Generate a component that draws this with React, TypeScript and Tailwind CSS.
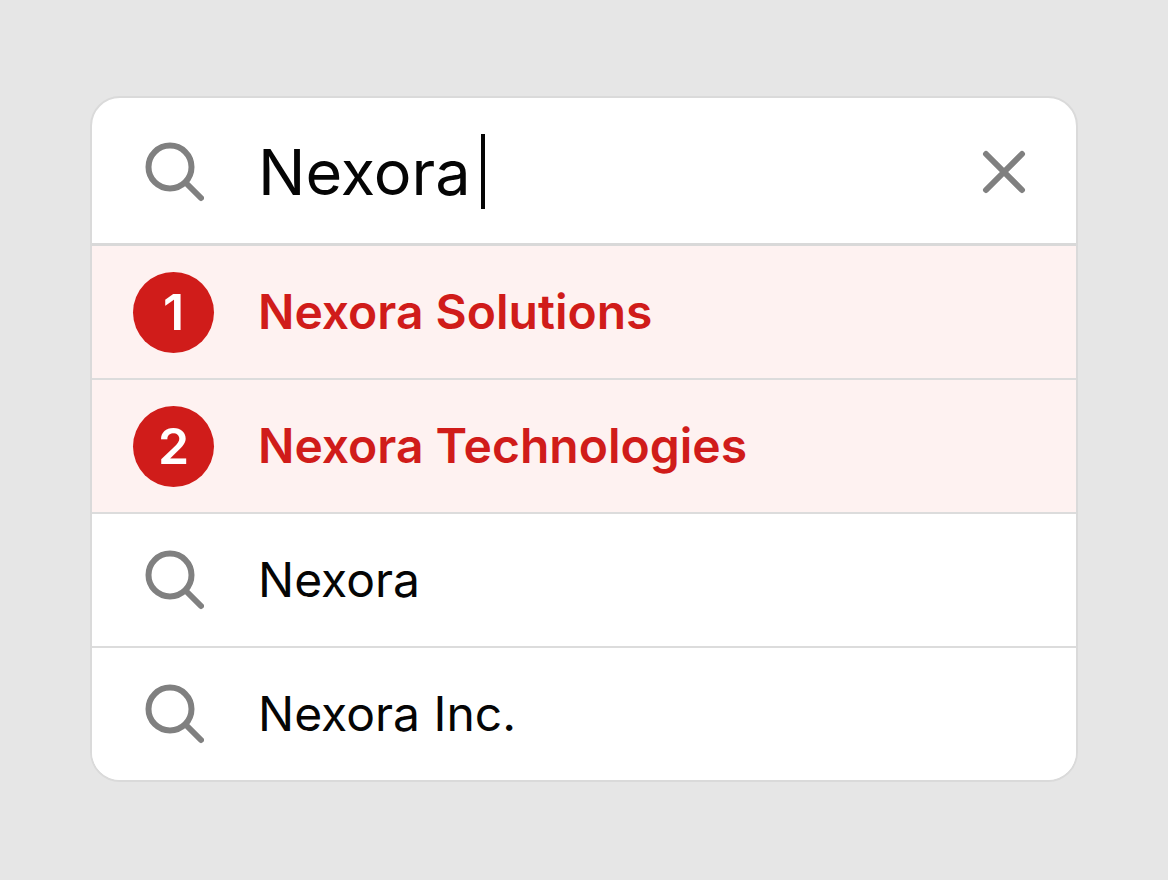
import { useRef, useState } from 'react';

interface Suggestion {
  id: string;
  label: string;
  rank: number | null;
}

const suggestions: Suggestion[] = [
  { id: 'solutions', label: 'Nexora Solutions', rank: 1 },
  { id: 'technologies', label: 'Nexora Technologies', rank: 2 },
  { id: 'nexora', label: 'Nexora', rank: null },
  { id: 'inc', label: 'Nexora Inc.', rank: null },
];

function SearchIcon() {
  return (
    <svg
      className="w-[60px] h-[60px] text-[#808080]"
      viewBox="0 0 60 60"
      fill="none"
      stroke="currentColor"
      strokeWidth="6"
      strokeLinecap="round"
      aria-hidden="true"
    >
      <circle cx="26" cy="25" r="21.5" />
      <path d="M41.5 40.5 57 56" />
    </svg>
  );
}

function CloseIcon() {
  return (
    <svg
      className="w-11 h-11 text-[#808080]"
      viewBox="0 0 44 44"
      fill="none"
      stroke="currentColor"
      strokeWidth="6"
      strokeLinecap="round"
      aria-hidden="true"
    >
      <path d="M4 4 40 40M40 4 4 40" />
    </svg>
  );
}

function SuggestionRow({ item, onPick }: { item: Suggestion; onPick: (label: string) => void }) {
  const ranked = item.rank !== null;
  return (
    <li className={`border-b-2 border-[#dcdcdc] last:border-b-0 ${ranked ? 'bg-[#fef2f1]' : 'bg-white'}`}>
      <button
        type="button"
        onClick={() => onPick(item.label)}
        className="w-full h-[132px] pl-[41px] pr-[50px] flex items-center gap-11 text-left cursor-pointer"
      >
        <span className="w-[81px] shrink-0 flex justify-center">
          {ranked ? (
            <span className="w-[81px] h-[81px] rounded-full bg-[#d01c1a] text-white text-[50px] leading-none font-semibold flex items-center justify-center">
              {item.rank}
            </span>
          ) : (
            <SearchIcon />
          )}
        </span>
        <span
          className={`min-w-0 truncate text-[48px] leading-[64px] ${
            ranked ? 'font-semibold text-[#d01c1a]' : 'font-normal text-[#050505]'
          }`}
        >
          {item.label}
        </span>
      </button>
    </li>
  );
}

export default function App() {
  const [query, setQuery] = useState('Nexora');
  const inputRef = useRef<HTMLInputElement>(null);

  const clear = () => {
    setQuery('');
    inputRef.current?.focus();
  };

  return (
    <main className="min-h-screen bg-[#e6e6e6] px-[90px] py-24 font-['Inter','Liberation_Sans',sans-serif]">
      <div className="rounded-[30px] border-2 border-[#dadada] bg-white overflow-hidden">
        {/* Search field */}
        <div className="h-[148px] pt-0.5 pl-[41px] pr-[50px] border-b-3 border-[#d9d9d9] flex items-center gap-11">
          <label htmlFor="company-search" className="w-[81px] shrink-0 flex justify-center">
            <SearchIcon />
          </label>
          <div className="flex-1 min-w-0 flex items-center gap-2.5">
            <input
              id="company-search"
              ref={inputRef}
              type="text"
              aria-label="Search"
              autoComplete="off"
              value={query}
              onChange={(e) => setQuery(e.target.value)}
              className="field-sizing-content max-w-full bg-transparent text-[63px] leading-[76px] text-[#050505] caret-transparent outline-none"
            />
            <span className="w-1 h-[75px] shrink-0 bg-[#050505]" aria-hidden="true" />
          </div>
          <button type="button" aria-label="Clear search" onClick={clear} className="shrink-0 cursor-pointer">
            <CloseIcon />
          </button>
        </div>

        {/* Suggestions */}
        <ul>
          {suggestions.map((item) => (
            <SuggestionRow key={item.id} item={item} onPick={setQuery} />
          ))}
        </ul>
      </div>
    </main>
  );
}
